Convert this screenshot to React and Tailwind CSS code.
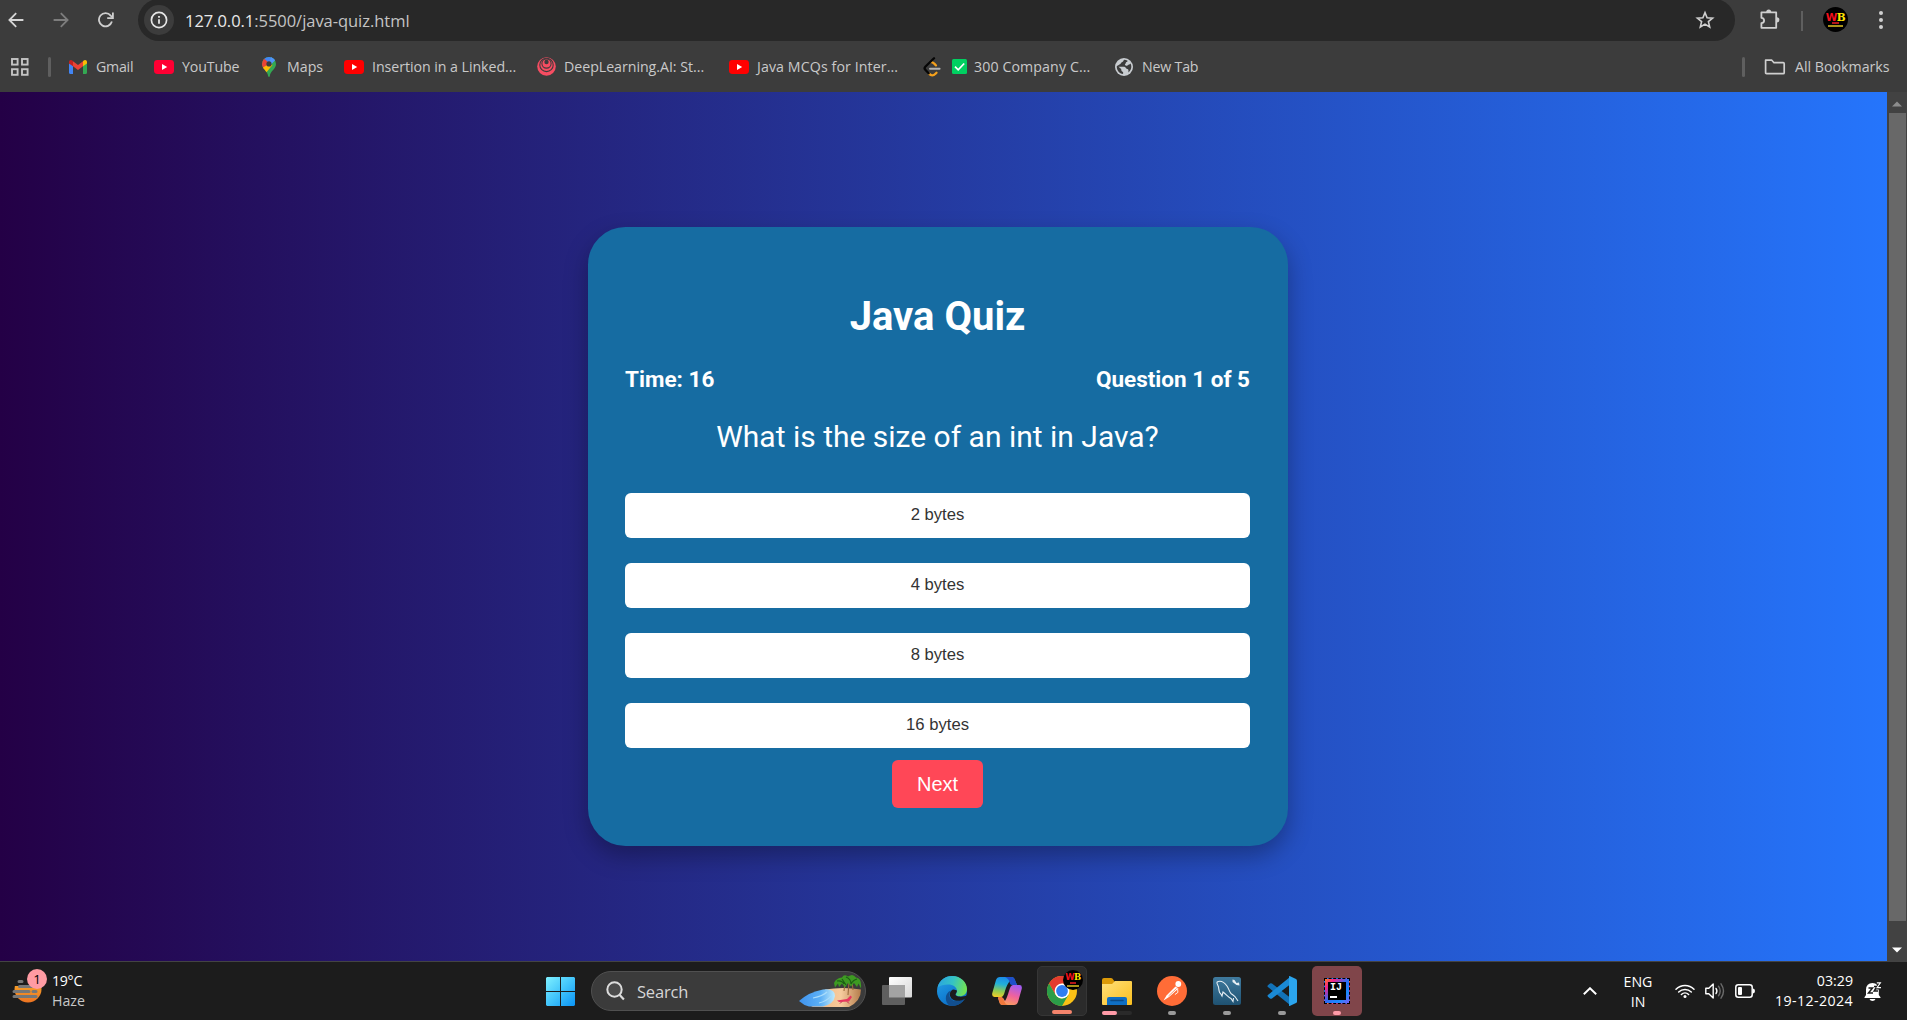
import React from "react";

const BackIcon = ({ className }) => (
  <svg viewBox="0 0 16 16" className={`h-[16px] w-[16px] ${className}`} fill="none" stroke="currentColor" strokeWidth="1.8">
    <path d="M15.4 8H1.8M8.2 1.2L1.4 8l6.8 6.8" />
  </svg>
);

const ReloadIcon = () => (
  <svg viewBox="0 0 16 16" className="h-[16px] w-[16px] text-[#cfcfcf]" fill="none" stroke="currentColor" strokeWidth="1.8">
    <path d="M13.9 9.6A6.6 6.6 0 1 1 12.7 3.6L14.6 5.4" />
    <path d="M14.9 .6v5.6H9.2" />
  </svg>
);

const InfoIcon = () => (
  <svg viewBox="0 0 18 18" className="h-[18px] w-[18px]" fill="none" stroke="#e6e6e6">
    <circle cx="9" cy="9" r="7.6" strokeWidth="1.7" />
    <path d="M9 8.2v4.6M9 5v1.8" strokeWidth="1.8" />
  </svg>
);

const StarIcon = () => (
  <svg viewBox="0 0 20 20" className="h-[20px] w-[20px]" fill="none" stroke="#cfcfcf" strokeWidth="1.6">
    <path d="M10 2.6l2.1 5.1 5.5.4-4.2 3.5 1.3 5.4L10 14.1 5.3 17l1.3-5.4L2.4 8.1l5.5-.4z" />
  </svg>
);

const PuzzleIcon = () => (
  <svg viewBox="0 0 22 22" className="h-[22px] w-[22px]">
    <path d="M2.4 4.4h14.8v15.4H2.4v-4.6c3.6-.5 3.6-5 0-5.4z" fill="none" stroke="#cfcfcf" strokeWidth="1.8" strokeLinejoin="round" />
    <path d="M7.2 4a2.5 2.5 0 0 1 5 0zM17.8 9.2a2.6 2.6 0 0 1 0 5.2z" fill="#cfcfcf" />
  </svg>
);

function Badge({ className }) {
  return (
    <div className={`flex flex-col items-center justify-center overflow-hidden rounded-full bg-black leading-none ${className}`}>
      <div className="font-bold tracking-[-0.5px] whitespace-nowrap">
        <span className="font-['DejaVu_Sans',sans-serif] text-[#f4101c]">W</span>
        <span className="font-['DejaVu_Serif',serif] text-[#ffe500]">B</span>
      </div>
      <div className="h-[2px] w-[26%] bg-[#b3151a]" />
      <div className="mt-px h-[2px] w-[62%] bg-[#a8921a]" />
    </div>
  );
}

const GridIcon = () => (
  <svg viewBox="0 0 18 18" className="h-[18px] w-[18px]" fill="none" stroke="#c4c4c4" strokeWidth="1.9">
    <rect x="1" y="1" width="5.6" height="5.6" />
    <rect x="11" y="1" width="5.6" height="5.6" />
    <rect x="1" y="11.2" width="5.6" height="5.6" />
    <rect x="11" y="11.2" width="5.6" height="5.6" />
  </svg>
);

const GmailIcon = () => (
  <svg viewBox="0 0 18 14" className="h-[14px] w-[18px]">
    <path d="M0 3v9.8C0 13.5.5 14 1.2 14H4V5.5z" fill="#4285f4" />
    <path d="M14 14h2.8c.7 0 1.2-.5 1.2-1.2V3l-4 2.5z" fill="#34a853" />
    <path d="M14 1.2v5L18 3.4V2c0-1.8-1.9-2.6-3.3-1.5z" fill="#fbbc04" />
    <path d="M4 6.3V1.2l5 3.8 5-3.8v5.1L9 10z" fill="#ea4335" />
    <path d="M0 2v1.4l4 2.9V1.2L3.3.5C1.9-.6 0 .2 0 2z" fill="#c5221f" />
  </svg>
);

const YouTubeIcon = ({ color }) => (
  <svg viewBox="0 0 20 14" className="h-[14px] w-[20px]">
    <rect width="20" height="14" rx="3.4" fill={color} />
    <path d="M8 4l5.2 3L8 10z" fill="#fff" />
  </svg>
);

const MapsIcon = () => (
  <svg viewBox="0 0 14 20" className="h-[20px] w-[14px]">
    <defs>
      <clipPath id="pin"><path d="M7 0a7 7 0 0 1 7 7c0 5.2-5.7 6.6-6.2 12.3Q7 20.5 6.2 19.3C5.7 14 0 12 0 7A7 7 0 0 1 7 0z" /></clipPath>
    </defs>
    <g clipPath="url(#pin)">
      <path d="M0 0h14v20H0z" fill="#34a853" />
      <path d="M0 0h14v2.4L7 8 1 3z" fill="#4285f4" />
      <path d="M9 0h5v2.2L8.5 8 7 7z" fill="#4f95f7" />
      <path d="M0 2l2-.5L7 6 1.2 13 0 11z" fill="#ea4335" />
      <path d="M7 7L0 11v4l3.4 1.5L10.5 8z" fill="#fbbc04" />
    </g>
    <circle cx="7" cy="6.9" r="2.6" fill="#3c3c3c" />
  </svg>
);

const DeepLearningIcon = () => (
  <svg viewBox="0 0 19 19" className="h-[19px] w-[19px]">
    <circle cx="9.5" cy="9.5" r="9.3" fill="#f64d62" />
    <g fill="none" stroke="#3c3c3c" strokeWidth="1.1">
      <circle cx="9.5" cy="7.9" r="6.7" />
      <circle cx="9.5" cy="6.5" r="4.6" />
    </g>
    <circle cx="9.5" cy="5" r="2.2" fill="#3c3c3c" />
  </svg>
);

const LeetCodeIcon = () => (
  <svg viewBox="0 0 18 20" className="h-[20px] w-[18px]" fill="none" strokeWidth="2.3" strokeLinecap="round">
    <path d="M8.2 5.2Q9.8 4.800 13 8.400M6 16.600q3.200 3.400 6.500.1l1-1" stroke="#f5a11c" />
    <path d="M11 1.300L2.300 9.800Q.9 11.300 2.300 12.800L5.600 16.300" stroke="#060606" />
    <path d="M7 11.700h9.600" stroke="#b3b3b3" strokeWidth="1.900" />
  </svg>
);

const GlobeIcon = () => (
  <svg viewBox="0 0 18 18" className="h-[18px] w-[18px]">
    <circle cx="9" cy="9" r="9" fill="#c8ccd0" />
    <path d="M9.200 1.700C8 2.600 8.500 3.800 6.800 4.300 5.800 4.600 6 6 5 6.300c-1 .3-1.300 1-3.200 1.700-.4 4 2.500 7.700 6.300 8.100v-2.200c-1.700-.2-1.900-1.700-1.900-2.800L3.500 8.800h5.600c1.700 0 1.500 2.100 3.100 2.300 1.500 0 1.300 1.700 1.200 3.300 3.700-3 3.300-6.800 2-8.800-.9 1.200-1.600 1-2.500 1.300-.8 1.500-2.500.9-2.800.2C9.300 6.200 11 5.600 11 4.200c1.100-.3 1.500-.7 1.600-1.500-1-.7-2.200-1-3.400-1z" fill="#3c3c3c" />
  </svg>
);

const FolderOutline = () => (
  <svg viewBox="0 0 22 16" className="h-[16px] w-[22px]" fill="none" stroke="#cfcfcf" strokeWidth="1.7" strokeLinejoin="round">
    <path d="M1.6 1.2h6.2l2.2 2.500h9.200q1 0 1 1v9q0 1-1 1H2.600q-1 0-1-1z" />
  </svg>
);

const CheckIcon = () => (
  <svg viewBox="0 0 15 15" className="h-[15px] w-[15px]">
    <rect width="15" height="15" rx="1.5" fill="#00d061" />
    <path d="M3 7.600l3.200 3.200L12.200 4.500" fill="none" stroke="#fff" strokeWidth="1.7" />
  </svg>
);

const label = "font-['Open_Sans',sans-serif] text-[14.2px] leading-[20px] whitespace-nowrap";

const bookmarks = [
  { icon: <GmailIcon />, text: "Gmail", iconBox: "ml-[18px] w-[27px]", textBox: "w-[37px] tracking-[-0.25px]" },
  { icon: <YouTubeIcon color="#ff0033" />, text: "YouTube", iconBox: "ml-[21px] w-[28px]", textBox: "w-[57px] tracking-[-0.15px]" },
  { icon: <MapsIcon />, text: "Maps", iconBox: "ml-[23px] w-[25px]", textBox: "w-[36px]" },
  { icon: <YouTubeIcon color="#ff0000" />, text: "Insertion in a Linked...", iconBox: "ml-[21px] w-[28px]", textBox: "w-[144px] tracking-[-0.05px]" },
  { icon: <DeepLearningIcon />, text: "DeepLearning.AI: St...", iconBox: "ml-[21px] w-[27px]", textBox: "w-[140px] tracking-[-0.03px]" },
  { icon: <YouTubeIcon color="#ff0000" />, text: "Java MCQs for Inter...", iconBox: "ml-[25px] w-[28px]", textBox: "w-[141px] tracking-[0.1px]" },
  { icon: <div className="-ml-px flex items-center gap-[11px]"><LeetCodeIcon /><CheckIcon /></div>, text: "300 Company C...", iconBox: "ml-[26px] w-[50px]", textBox: "w-[116px] tracking-[0.1px]" },
  { icon: <GlobeIcon />, text: "New Tab", iconBox: "ml-[25px] w-[27px]", textBox: "w-[57px] tracking-[-0.2px]" },
];

function BrowserChrome() {
  return (
    <header className="h-[92px] overflow-hidden bg-[#3c3c3c] text-[#c9c9c9]">
      <div className="flex h-[41px] items-center pl-[8px]">
        <BackIcon className="-mt-px text-[#d5d5d5]" />
        <BackIcon className="-mt-px ml-[29px] rotate-180 text-[#7d7d7d]" />
        <div className="-mt-px ml-[29px]"><ReloadIcon /></div>
        <div className="-mt-px ml-[24px] flex h-[42px] w-[1597px] items-center rounded-full bg-[#282828] pr-[20px] pl-[6px]">
          <div className="flex h-[30px] w-[30px] items-center justify-center rounded-full bg-[#3c3c3c]"><InfoIcon /></div>
          <div className="ml-[11px] pt-px font-['Open_Sans',sans-serif] text-[16.5px] leading-[22px] tracking-[-0.04px] text-[#c4c4c4]">
            <span className="text-[#e8e8e8]">127.0.0.1</span>:5500/java-quiz.html
          </div>
          <div className="ml-auto"><StarIcon /></div>
        </div>
        <div className="-mt-[3px] ml-[24px]"><PuzzleIcon /></div>
        <div className="ml-[20px] h-[20px] w-[2px] bg-[#5f5f5f]" />
        <Badge className="-mt-[2px] ml-[20px] h-[25px] w-[25px] text-[10.5px]" />
        <div className="-mt-px ml-[31px] flex flex-col gap-[3px]">
          <i className="h-[4px] w-[4px] rounded-full bg-[#d0d0d0]" />
          <i className="h-[4px] w-[4px] rounded-full bg-[#d0d0d0]" />
          <i className="h-[4px] w-[4px] rounded-full bg-[#d0d0d0]" />
        </div>
      </div>
      <div className="flex h-[51px] items-center pl-[11px]">
        <GridIcon />
        <div className="ml-[19px] h-[20px] w-[3px] rounded-full bg-[#5f5f5f]" />
        {bookmarks.map((b) => (
          <div key={b.text} className="flex items-center">
            <div className={b.iconBox}>{b.icon}</div>
            <div className={`${label} ${b.textBox}`}>{b.text}</div>
          </div>
        ))}
        <div className="mr-[19px] ml-auto h-[20px] w-[3px] rounded-full bg-[#5f5f5f]" />
        <FolderOutline />
        <div className={`${label} mr-[18px] ml-[9px] w-[94px]`}>All Bookmarks</div>
      </div>
    </header>
  );
}

function Quiz() {
  return (
    <section className="mt-[135px] flex h-[619px] w-[700px] flex-col items-center rounded-[37.5px] bg-[#166ca2] pt-[66px] pr-[38px] pl-[37px] font-[Roboto,sans-serif] text-white shadow-[0_10px_25px_rgba(0,0,0,0.3)]">
      <h1 className="text-[40px] leading-[48px] font-bold">Java Quiz</h1>
      <div className="mt-[24px] flex w-full justify-between text-[22.5px] leading-[28px] font-bold">
        <span>Time: 16</span>
        <span>Question 1 of 5</span>
      </div>
      <p className="mt-[26px] text-[30px] leading-[36px]">What is the size of an int in Java?</p>
      <div className="mt-[38px] flex w-full flex-col gap-[25px] font-['Liberation_Sans',sans-serif]">
        {["2 bytes", "4 bytes", "8 bytes", "16 bytes"].map((t) => (
          <button key={t} className="flex h-[45px] items-center justify-center rounded-[6px] bg-white pb-px text-[16.67px] leading-[20px] text-[#333]">{t}</button>
        ))}
      </div>
      <button className="mt-[12px] h-[48px] w-[91px] rounded-[6px] bg-[#ff4757] font-['Liberation_Sans',sans-serif] text-[20px] leading-[48px]">Next</button>
    </section>
  );
}

function Scrollbar() {
  return (
    <div className="flex w-[20px] flex-col items-center bg-[#424242]">
      <div className="flex h-[21px] items-center pt-[3px]"><svg viewBox="0 0 10 6" className="h-[6px] w-[10px]"><path d="M0 5.5L5 .5l5 5z" fill="#8d8d8d" /></svg></div>
      <div className="h-[808px] w-[17px] bg-[#686868]" />
      <div className="flex h-[40px] items-end pb-[8px]"><svg viewBox="0 0 10 6" className="h-[6px] w-[10px]"><path d="M0 .5h10l-5 5z" fill="#fff" /></svg></div>
    </div>
  );
}

const WeatherIcon = () => (
  <svg viewBox="0 0 32 32" className="h-[32px] w-[32px]">
    <defs><linearGradient id="sun" x1="0" y1="0" x2="0" y2="1"><stop offset="0" stopColor="#f9b52b" /><stop offset="1" stopColor="#ee7422" /></linearGradient></defs>
    <circle cx="16" cy="15" r="13.5" fill="url(#sun)" />
    <path d="M0 0h31v12H0z" fill="#1c1c1c" />
    <g stroke="#777" strokeWidth="3" strokeLinecap="round"><path d="M7 7.500h3M7.500 12.500h21M2 17.500h15M21 17.500h3M2 22.500h22" /></g>
  </svg>
);

const WindowsLogo = () => (
  <svg viewBox="0 0 29 29" className="h-[29px] w-[29px]">
    <defs><linearGradient id="win" x1="0" y1="0" x2="29" y2="29" gradientUnits="userSpaceOnUse"><stop offset="0" stopColor="#7ff0ff" /><stop offset=".5" stopColor="#42c5fb" /><stop offset="1" stopColor="#0a93f5" /></linearGradient></defs>
    <path d="M1 0h13v14H0V1zM15 0h13l1 1v13H15zM0 15h14v14H1l-1-1zM15 15h14v13l-1 1H15z" fill="url(#win)" />
  </svg>
);

const SearchIcon = () => (
  <svg viewBox="0 0 19 20" className="h-[20px] w-[19px]" fill="none" stroke="#dcdcdc">
    <circle cx="8.5" cy="8.5" r="7.2" strokeWidth="2" fill="#4b4b4b" />
    <path d="M13.5 13.800l4.400 4.700" strokeWidth="2.2" />
  </svg>
);

const BeachArt = () => (
  <svg viewBox="0 0 64 34" className="h-[34px] w-[64px]">
    <defs>
      <linearGradient id="sea" x1="0" y1="0" x2="1" y2="0"><stop offset="0" stopColor="#3f93ee" /><stop offset=".6" stopColor="#5cb0f6" /><stop offset="1" stopColor="#bfeafb" /></linearGradient>
      <linearGradient id="sand" x1="0" y1="0" x2="1" y2="0"><stop offset="0" stopColor="#f0b27c" /><stop offset=".6" stopColor="#f6cb9d" /><stop offset="1" stopColor="#b57d4c" /></linearGradient>
    </defs>
    <path d="M26 15.500Q44 12.500 62 15.500Q62 27 50 33H12q10-4 14-17.500z" fill="url(#sand)" />
    <path d="M0 27Q10 18 24 15.500 36 14 36 22 35 30 24 32.500H10Q5 31.500 0 27z" fill="url(#sea)" />
    <path d="M14 24q10-2 14-6M20 29q8-2 12-7" stroke="#a9dcfb" strokeWidth="1.2" fill="none" />
    <path d="M45 17l1-9M49 21l1-13M54 16l-1-9" stroke="#9a6a3c" strokeWidth="1.1" />
    <path d="M35 9Q37 4 43 3.500 45-.5 49 2.500 54-1 57 3.500q6 .5 5 11l-2.500-5L58 13l-3-4-3 3.500L49 9l-3 4.500L43 9.500 40 13l-1-3.500-3 4z" fill="#3d9a22" />
    <path d="M38 7q5-1 7 3M47 3q5 2 5 7M58 5q-4 1-6 5M43 5l4 6" stroke="#1c5f14" strokeWidth="1.2" fill="none" />
    <path d="M38 26.500l10-1.500 3.500-3.500 1.500 1.500-3 4.500-10 .5z" fill="#e8365f" />
    <path d="M41 29.500l2-2M50 29.500l-2-2" stroke="#c22b52" />
  </svg>
);

const TaskViewIcon = () => (
  <svg viewBox="0 0 30 28" className="h-[28px] w-[30px]">
    <defs><linearGradient id="tv" x1="0" y1="0" x2="1" y2="1"><stop offset="0" stopColor="#fff" /><stop offset="1" stopColor="#d7d7d7" /></linearGradient></defs>
    <rect x="7" y="0" width="23" height="20.5" rx="1" fill="url(#tv)" />
    <rect x="0" y="8" width="23" height="20" rx="1" fill="#5f5f5f" />
    <path d="M7 8h16v12.500H7z" fill="#a3a3a3" />
  </svg>
);

const EdgeIcon = () => (
  <svg viewBox="0 0 30 30" className="h-[30px] w-[30px]">
    <defs>
      <linearGradient id="edgeTop" x1="0" y1=".3" x2="1" y2=".5"><stop offset="0" stopColor="#2aa4e0" /><stop offset=".5" stopColor="#35c3c4" /><stop offset="1" stopColor="#73e350" /></linearGradient>
      <linearGradient id="edgeLeft" x1="0" y1="0" x2=".6" y2="1"><stop offset="0" stopColor="#2ba4e4" /><stop offset=".5" stopColor="#1687d8" /><stop offset="1" stopColor="#0b6cc4" /></linearGradient>
    </defs>
    <circle cx="15" cy="15" r="15" fill="url(#edgeLeft)" />
    <path d="M28 22.500A15 15 0 0 1 13 29.900C7.500 27 7 17 14 14.500 10 20 14 26 21 25q4-.6 7-2.500z" fill="#124f8f" />
    <path d="M.6 11.500C2.500 4 8.500 0 15 0c9 0 15 6.500 15 13 0 6-5 8-9.300 7-3-.8-1-2.500-.8-5C20 11 16 8.500 11 8.500c-4 0-8 1-10.400 3z" fill="url(#edgeTop)" />
    <path d="M20 14.500c0 2.500-2.500 3.500-1 5 2.500 1.800 7.500 1.300 11 .1a15 15 0 0 1-1.600 2.900c-6 4-15 3-15.600-4 0-3 2-5 4-5z" fill="#1c1c1c" />
  </svg>
);

const CopilotIcon = () => (
  <svg viewBox="0 0 30 28" className="h-[28px] w-[30px]">
    <defs>
      <linearGradient id="cpA" x1=".4" y1="0" x2=".2" y2="1"><stop offset="0" stopColor="#1b8be8" /><stop offset=".35" stopColor="#22b0d8" /><stop offset=".7" stopColor="#8fcb52" /><stop offset="1" stopColor="#f3cd27" /></linearGradient>
      <linearGradient id="cpB" x1=".7" y1="0" x2=".3" y2="1"><stop offset="0" stopColor="#a35cf2" /><stop offset=".5" stopColor="#f0629c" /><stop offset="1" stopColor="#fba55a" /></linearGradient>
    </defs>
    <path d="M8 0h12l2 1 3 7h-5l-2-4q-3 3-5 10-1.500 6-4 6H2.500Q-.5 20 .3 16L4 3Q5 0 8 0z" fill="url(#cpA)" />
    <path d="M13 0h7q2 0 3 3l2 5h-5q-2 0-2.500-3T13 0z" fill="#1f4fc9" />
    <path d="M22 28H10l-2-1-2-6h5l2 3q2-3 4-10 1.500-6 4-6h6.500Q30.500 8 29.700 12L26 25q-1 3-4 3z" fill="url(#cpB)" />
    <path d="M6 20h4q1.500 1 2 4 1 3 4 4h-6q-2.500-1-3-4z" fill="#f0783d" />
  </svg>
);

const ChromeIcon = () => (
  <svg viewBox="0 0 30 30" className="h-[30px] w-[30px]">
    <circle cx="15" cy="15" r="15" fill="#fbc116" />
    <path d="M2 7.500A15 15 0 0 1 28 7.500H15L8.500 18.800z" fill="#e33b2e" />
    <path d="M2 7.500L8.500 18.800Q11 22.500 15 22.500l6.500-3.700L15 30A15 15 0 0 1 2 7.500z" fill="#2b9d48" />
    <circle cx="15" cy="15" r="7.4" fill="#fff" />
    <circle cx="15" cy="15" r="5.9" fill="#2f7df0" />
  </svg>
);

const FilesIcon = () => (
  <svg viewBox="0 0 30 27" className="h-[27px] w-[30px]">
    <defs><linearGradient id="fold" x1="0" y1="0" x2="1" y2="1"><stop offset="0" stopColor="#ffe07a" /><stop offset="1" stopColor="#fbbf1f" /></linearGradient></defs>
    <path d="M0 2Q0 0 2 0h7q1.500 0 2.500 2L13 4v5H0z" fill="#dc9a08" />
    <path d="M0 6h10l3-3h16q1 0 1 1v22q0 1-1 1H1q-1 0-1-1z" fill="url(#fold)" />
    <path d="M5 27v-6q0-2 2-2h16q2 0 2 2v6z" fill="#0f6fc4" />
    <path d="M9 22.500h12" stroke="#0b4a86" strokeWidth="1.5" strokeLinecap="round" />
  </svg>
);

const PostmanIcon = () => (
  <svg viewBox="0 0 30 30" className="h-[30px] w-[30px]">
    <circle cx="15" cy="15" r="15" fill="#ff6c37" />
    <circle cx="21.3" cy="8" r="2.9" fill="#fff" />
    <path d="M18.500 10.500l3 2-9.500 8.500-5.500 3.500 3-5z" fill="#fff" />
    <path d="M19.500 12.500l-8 7.500M20.500 12.500v5l-3 2" stroke="#ff6c37" strokeWidth=".7" fill="none" />
    <path d="M20.600 12.800l.3 3.600-3 2.200" stroke="#fff" strokeWidth=".9" fill="none" />
  </svg>
);

const WorkbenchIcon = () => (
  <svg viewBox="0 0 28 28" className="h-[28px] w-[28px]">
    <defs><linearGradient id="wb" x1="0" y1="0" x2="0" y2="1"><stop offset="0" stopColor="#3f7a9e" /><stop offset="1" stopColor="#1f5272" /></linearGradient></defs>
    <rect width="28" height="28" rx="2.5" fill="url(#wb)" />
    <path d="M4 5c3-1.500 7 0 10 4 2 3 2.500 6 4 7.500 2 1.500 4 2.500 5 4.500l2 3M4 5c-.5 2 1 3 1.500 5 .5 3 .5 6 2 6.500l1.500 2.500 1-4c3 2 5 5 8 6.500l2 3 .5-3.500" fill="none" stroke="#e6eef3" strokeWidth="1.1" />
    <path d="M19.500 2.500l2 .5 2 3 2.500-.5.500 3-3-.5-4-3z" fill="#e6eef3" />
  </svg>
);

const CodeIcon = () => (
  <svg viewBox="0 0 30 30" className="h-[30px] w-[30px]">
    <path d="M1.200 9L3 7.500q1-.6 2 .1L23 21.500V29L.9 11q-1-1 .3-2z" fill="#1272b8" />
    <path d="M1.200 21L3 22.500q1 .6 2-.1L23 8.500V1L.9 19q-1 1 .3 2z" fill="#1a8ad6" />
    <path d="M22 .3q.5-.4 1.200-.1l5.800 2.700q1 .5 1 1.600v21q0 1.100-1 1.600l-5.800 2.700q-.7.300-1.200-.1z" fill="#2ba5ee" />
  </svg>
);

const IntelliJIcon = () => (
  <div className="flex h-[26px] w-[26px] items-center justify-center border border-dashed border-black bg-[linear-gradient(135deg,#fc801d_0%,#f3218a_20%,#2b6df6_50%,#1a8bff_75%,#7a5cf5_100%)]">
    <div className="flex h-[18px] w-[18px] flex-col bg-black pl-[2px] font-['Liberation_Mono',monospace] text-[10px] leading-[12px] font-bold text-white">
      IJ
      <div className="mt-[2px] h-[1.5px] w-[7px] bg-white" />
    </div>
  </div>
);

const Dot = ({ className }) => <div className={`absolute bottom-px h-[4px] rounded-full ${className}`} />;

const apps = [
  { icon: <EdgeIcon /> },
  { icon: <CopilotIcon /> },
  {
    icon: <><ChromeIcon /><Badge className="absolute top-[3px] right-[3px] h-[20px] w-[20px] text-[8.5px]" /></>,
    tile: "bg-[#2b2b2b] border border-[#363636]",
    dot: <Dot className="w-[20px] bg-[#f4846c]" />,
  },
  {
    icon: <FilesIcon />,
    dot: <div className="absolute bottom-px flex h-[4px] w-[30px] rounded-full bg-[#2a2a2a]"><div className="w-[15px] rounded-full bg-[#ff9ba8]" /></div>,
  },
  { icon: <PostmanIcon />, dot: <Dot className="w-[8px] bg-[#9a9a9a]" /> },
  { icon: <WorkbenchIcon />, dot: <Dot className="w-[8px] bg-[#9a9a9a]" /> },
  { icon: <CodeIcon />, dot: <Dot className="w-[8px] bg-[#9a9a9a]" /> },
  { icon: <IntelliJIcon />, tile: "bg-[#80454a]", dot: <Dot className="w-[8px] bg-[#ff9ba8]" /> },
];

const WifiIcon = () => (
  <svg viewBox="0 0 20 16" className="h-[16px] w-[20px]" fill="none" stroke="#fff" strokeWidth="1.5" strokeLinecap="round">
    <path d="M1 6.200a12.700 12.700 0 0 1 18 0M3.700 9a9 9 0 0 1 12.600 0M6.400 11.500a5.200 5.200 0 0 1 7.200 0" />
    <circle cx="10" cy="13.4" r="1.5" fill="#fff" stroke="none" />
  </svg>
);

const VolumeIcon = () => (
  <svg viewBox="0 0 20 18" className="h-[18px] w-[20px]" fill="none" strokeWidth="1.4" strokeLinecap="round" strokeLinejoin="round">
    <path d="M.8 6.200h3L8.200 2v14l-4.400-4.200h-3z" stroke="#fff" />
    <path d="M11 6.400q1.800 2.600 0 5.200" stroke="#fff" />
    <path d="M13.500 4.200q3.400 4.800 0 9.600M16 1.800q5 7.200 0 14.400" stroke="#6b6b6b" />
  </svg>
);

const BatteryIcon = () => (
  <svg viewBox="0 0 20 14" className="h-[14px] w-[20px]">
    <rect x=".8" y=".8" width="16.4" height="12.4" rx="2.5" fill="none" stroke="#fff" strokeWidth="1.5" />
    <rect x="3" y="3" width="4" height="8" rx="1" fill="#fff" />
    <path d="M18 4.500q2 .3 2 2.500t-2 2.500z" fill="#fff" />
  </svg>
);

const BellIcon = () => (
  <svg viewBox="0 0 18 19" className="h-[19px] w-[18px]">
    <path d="M2 13V7.500Q2.300 1.200 8.500 1q6 .2 6.300 6.500V13l1.700 2.200v.8H.5v-.8z" fill="#fff" />
    <path d="M5.500 17h6q-.8 2-3 2t-3-2z" fill="#fff" />
    <path d="M4.500 6h4l-4 5h4.500" fill="none" stroke="#1c1c1c" strokeWidth="1.5" />
    <path d="M10 4.500h3.500L10 9h4" fill="none" stroke="#1c1c1c" strokeWidth="1.3" />
    <path d="M12.500 1h4l-3.700 5h4.400" fill="none" stroke="#1c1c1c" strokeWidth="2.8" />
    <path d="M12.800.9h3.600l-3.400 4.700H17" fill="none" stroke="#fff" strokeWidth="1.1" />
  </svg>
);

function Taskbar() {
  return (
    <footer className="flex h-[59px] items-center border-t border-[#434343] bg-[#1c1c1c] text-white">
      <div className="flex w-[546px] items-center pl-[12px]">
        <div className="relative -mt-[2px] h-[32px] w-[32px]">
          <WeatherIcon />
          <div className="absolute -top-[5px] left-[15px] flex h-[20px] w-[20px] items-center justify-center rounded-full bg-[#ff9ba3] font-['Open_Sans',sans-serif] text-[13.5px] text-black">1</div>
        </div>
        <div className={`${label} ml-[8px]`}>
          <div className="tracking-[-0.3px]">19°C</div>
          <div className="text-[#c8c8c8]">Haze</div>
        </div>
      </div>
      <WindowsLogo />
      <div className="ml-[16px] flex h-[40px] w-[275px] items-center rounded-full border border-[#505050] bg-[#3b3b3b] pl-[14px]">
        <SearchIcon />
        <span className="ml-[12px] w-[52px] pt-[2px] font-['Open_Sans',sans-serif] text-[16.5px] leading-[22px] tracking-[-0.2px] text-[#d6d6d6]">Search</span>
        <div className="mr-[2px] ml-auto"><BeachArt /></div>
      </div>
      <div className="ml-[16px]"><TaskViewIcon /></div>
      <div className="ml-[15px] flex gap-[5px]">
        {apps.map((a, i) => (
          <div key={i} className={`relative flex h-[50px] w-[50px] items-center justify-center rounded-[5px] ${a.tile ?? ""}`}>
            {a.icon}
            {a.dot}
          </div>
        ))}
      </div>
      <div className="ml-auto flex items-center pr-[25px]">
        <svg viewBox="0 0 14 8" className="h-[8px] w-[14px]" fill="none" stroke="#fff" strokeWidth="1.9"><path d="M.8 7.200L7 1.200l6.200 6" /></svg>
        <div className={`${label} ml-[26px] w-[30px] pt-px text-center`}>
          <div>ENG</div>
          <div>IN</div>
        </div>
        <div className="ml-[22px] flex gap-[10px] [&>svg]:self-center">
          <WifiIcon />
          <VolumeIcon />
          <BatteryIcon />
        </div>
        <div className={`${label} ml-[20px] w-[78px] text-right`}>
          <div>03:29</div>
          <div className="tracking-[0.4px]">19-12-2024</div>
        </div>
        <div className="ml-[11px]"><BellIcon /></div>
      </div>
    </footer>
  );
}

export default function App() {
  return (
    <div className="flex h-[1020px] w-[1907px] flex-col overflow-hidden">
      <BrowserChrome />
      <div className="flex h-[869px]">
        <main className="flex w-[1887px] justify-center bg-[linear-gradient(to_right,#240046,#2575fc)] pr-[11px]">
          <Quiz />
        </main>
        <Scrollbar />
      </div>
      <Taskbar />
    </div>
  );
}
